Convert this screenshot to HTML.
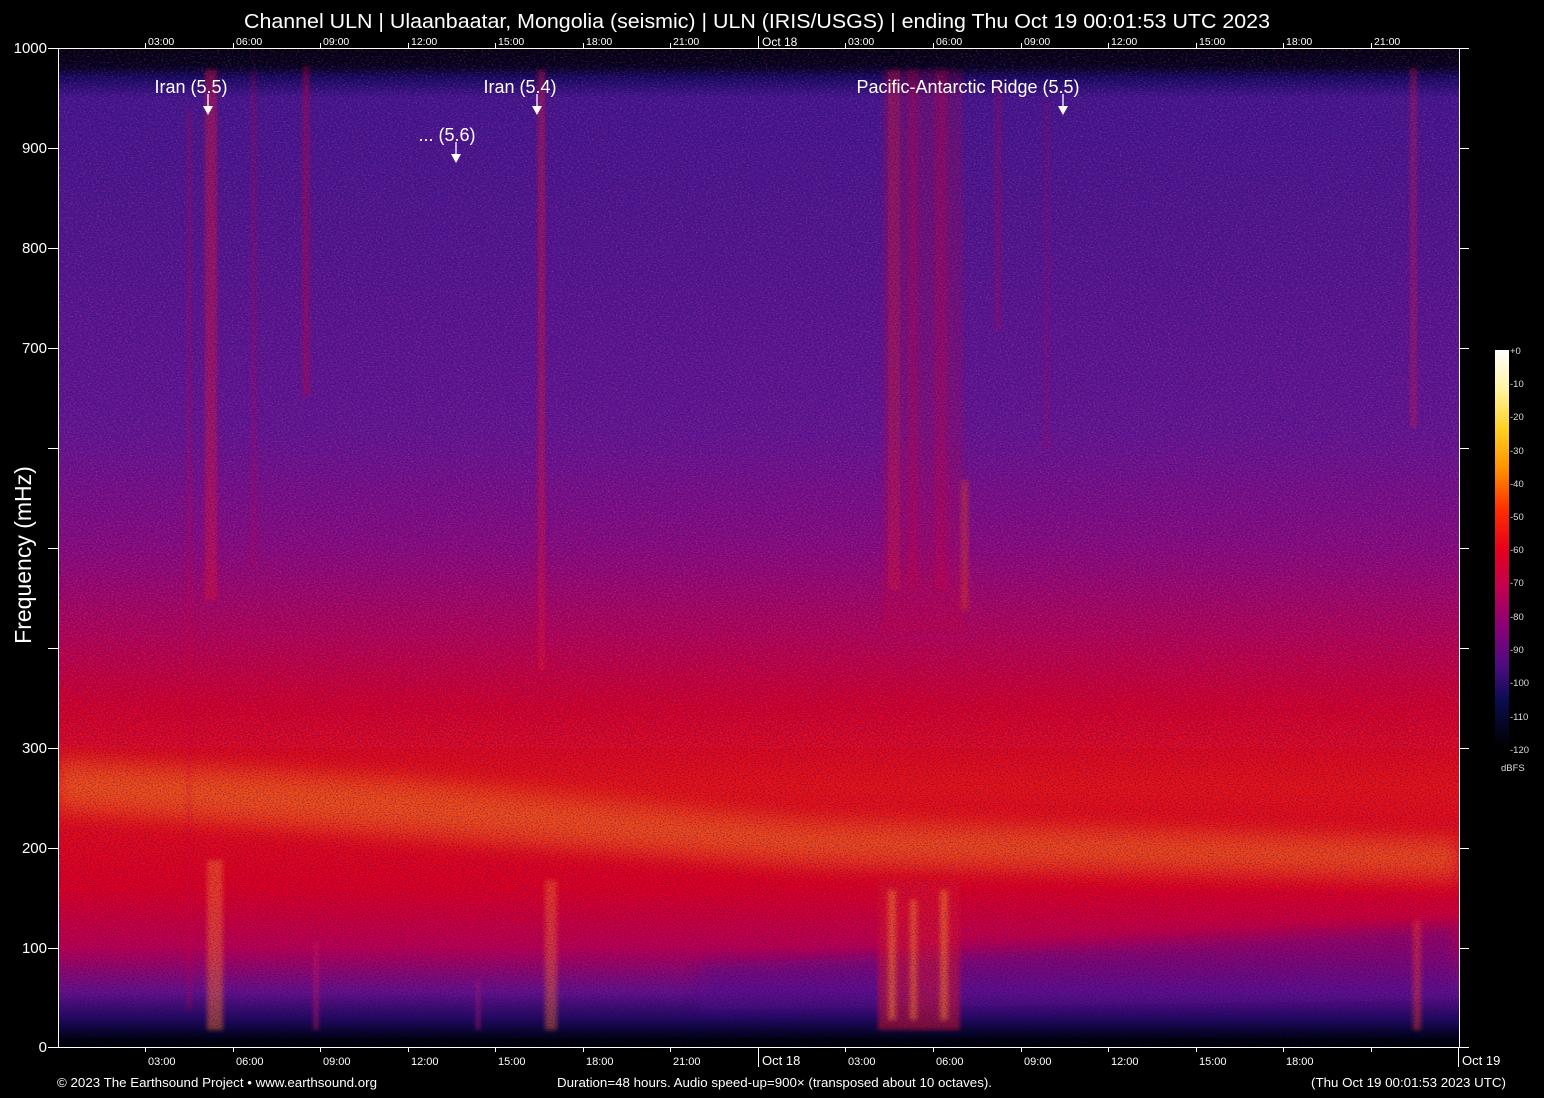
<!DOCTYPE html>
<html><head><meta charset="utf-8"><style>
html,body{margin:0;padding:0;background:#000;}
svg{display:block;font-family:"Liberation Sans",Arial,sans-serif;}
</style></head><body>
<svg width="1544" height="1098" viewBox="0 0 1544 1098" xmlns="http://www.w3.org/2000/svg">
<defs>
<linearGradient id="bg" x1="0" y1="48" x2="0" y2="1047" gradientUnits="userSpaceOnUse">
<stop offset="0" stop-color="#000"/>
<stop offset="0.018" stop-color="#02020f"/>
<stop offset="0.03" stop-color="#160b5a"/>
<stop offset="0.05" stop-color="#461888"/>
<stop offset="0.38" stop-color="#65178e"/>
<stop offset="0.50" stop-color="#8e0c7a"/>
<stop offset="0.59" stop-color="#bd044c"/>
<stop offset="0.66" stop-color="#dc001e"/>
<stop offset="0.74" stop-color="#ee1410"/>
<stop offset="0.84" stop-color="#e6001a"/>
<stop offset="0.90" stop-color="#c4004a"/>
<stop offset="0.945" stop-color="#6a1284"/>
<stop offset="0.972" stop-color="#240a58"/>
<stop offset="0.988" stop-color="#050418"/>
<stop offset="1" stop-color="#000"/>
</linearGradient>
<linearGradient id="cb" x1="0" y1="350" x2="0" y2="747" gradientUnits="userSpaceOnUse">
<stop offset="0" stop-color="#ffffff"/>
<stop offset="0.1" stop-color="#fff4a0"/>
<stop offset="0.2" stop-color="#ffd020"/>
<stop offset="0.3" stop-color="#ff9000"/>
<stop offset="0.4" stop-color="#ff3000"/>
<stop offset="0.5" stop-color="#e8001c"/>
<stop offset="0.6" stop-color="#c00050"/>
<stop offset="0.7" stop-color="#8a0078"/>
<stop offset="0.8" stop-color="#4a0c80"/>
<stop offset="0.88" stop-color="#0c0c50"/>
<stop offset="1" stop-color="#000"/>
</linearGradient>
<filter id="b8"><feGaussianBlur stdDeviation="8"/></filter>
<filter id="b2"><feGaussianBlur stdDeviation="2"/></filter>
<filter id="noise" x="0" y="0" width="100%" height="100%">
<feTurbulence type="fractalNoise" baseFrequency="0.6 0.9" numOctaves="2" seed="3"/>
<feColorMatrix type="matrix" values="0 0 0 0 0  0 0 0 0 0  0 0 0 0 0.3  0 0 0 -2.2 1.25"/>
</filter>
<filter id="noise2" x="0" y="0" width="100%" height="100%">
<feTurbulence type="fractalNoise" baseFrequency="0.5 0.8" numOctaves="2" seed="11"/>
<feColorMatrix type="matrix" values="0 0 0 0 0.85  0 0 0 0 0.05  0 0 0 0 0.3  0 0 0 -2.4 1.2"/>
</filter>
<clipPath id="plot"><rect x="58" y="48" width="1401" height="999"/></clipPath>
</defs>

<rect width="1544" height="1098" fill="#000"/>
<g clip-path="url(#plot)">
<rect x="58" y="48" width="1401" height="999" fill="url(#bg)"/>
<polygon points="700,965 1459,925 1459,1000 700,1010" fill="#5a1088" opacity="0.45" filter="url(#b8)"/>
<polygon points="58,755 400,775 800,815 1459,835 1459,885 800,870 400,840 58,815" fill="#ff6a10" opacity="0.4" filter="url(#b8)"/>
<polygon points="58,770 400,790 800,830 1459,848 1459,870 800,855 400,825 58,800" fill="#ff9a20" opacity="0.25" filter="url(#b8)"/>
<rect x="58" y="48" width="1401" height="700" filter="url(#noise2)" opacity="0.5"/>
<g filter="url(#b2)">
<rect x="187" y="110" width="4" height="900" fill="#e0103a" opacity="0.3"/>
<rect x="205" y="70" width="12" height="530" fill="#f0102a" opacity="0.45"/>
<rect x="207" y="860" width="16" height="170" fill="#ff7020" opacity="0.5"/>
<rect x="251" y="70" width="5" height="500" fill="#e0103a" opacity="0.25"/>
<rect x="303" y="66" width="6" height="330" fill="#e8102a" opacity="0.4"/>
<rect x="313" y="940" width="6" height="90" fill="#d01060" opacity="0.45"/>
<rect x="538" y="70" width="7" height="600" fill="#f0102a" opacity="0.45"/>
<rect x="545" y="880" width="12" height="150" fill="#ff7020" opacity="0.45"/>
<rect x="475" y="980" width="6" height="50" fill="#b01070" opacity="0.45"/>
<rect x="883" y="70" width="80" height="560" fill="#e8102a" opacity="0.2"/>
<rect x="888" y="70" width="12" height="520" fill="#f01020" opacity="0.3"/>
<rect x="908" y="70" width="10" height="520" fill="#f01020" opacity="0.25"/>
<rect x="935" y="70" width="12" height="520" fill="#f01020" opacity="0.25"/>
<rect x="962" y="480" width="6" height="130" fill="#ff5010" opacity="0.4"/>
<rect x="995" y="80" width="6" height="250" fill="#e0103a" opacity="0.25"/>
<rect x="1045" y="100" width="4" height="350" fill="#e0103a" opacity="0.2"/>
<rect x="1410" y="68" width="7" height="360" fill="#e8103a" opacity="0.35"/>
<rect x="1413" y="920" width="8" height="110" fill="#ff4020" opacity="0.45"/>
</g>
<rect x="878" y="880" width="82" height="150" fill="#e01428" opacity="0.55" filter="url(#b2)"/>
<g filter="url(#b2)" opacity="0.55">
<rect x="888" y="890" width="8" height="130" fill="#ff8020"/>
<rect x="910" y="900" width="7" height="120" fill="#ff8020"/>
<rect x="940" y="890" width="8" height="130" fill="#ff8020"/>
</g>
<rect x="58" y="1038" width="1401" height="9" fill="#000"/>
<rect x="58" y="48" width="1401" height="999" filter="url(#noise)" opacity="0.55"/>
</g>

<g stroke="#fff" stroke-width="1" fill="none">
<line x1="58.5" y1="48" x2="58.5" y2="1047"/>
<line x1="1459.5" y1="48" x2="1459.5" y2="1047"/>
<line x1="58" y1="48.5" x2="1469" y2="48.5"/>
<line x1="58" y1="1047.5" x2="1469" y2="1047.5"/>
<path d="M48 48.5h10M48 148.5h10M48 248.5h10M48 348.5h10M48 448.5h10M48 548.5h10M48 648.5h10M48 748.5h10M48 848.5h10M48 948.5h10M48 1047.5h10"/>
<path d="M1459 148.5h10M1459 248.5h10M1459 348.5h10M1459 448.5h10M1459 548.5h10M1459 648.5h10M1459 748.5h10M1459 848.5h10M1459 948.5h10"/>
<path d="M145.5 43v5M233.5 43v5M320.5 43v5M408.5 43v5M495.5 43v5M583.5 43v5M670.5 43v5M758.5 36v12M845.5 43v5M933.5 43v5M1021.5 43v5M1108.5 43v5M1196.5 43v5M1283.5 43v5M1371.5 43v5"/>
<path d="M145.5 1047v5M233.5 1047v5M320.5 1047v5M408.5 1047v5M495.5 1047v5M583.5 1047v5M670.5 1047v5M758.5 1047v20M845.5 1047v5M933.5 1047v5M1021.5 1047v5M1108.5 1047v5M1196.5 1047v5M1283.5 1047v5M1371.5 1047v5M1458.5 1047v20"/>
</g>

<text x="244" y="28" fill="#fff" font-size="20" textLength="1026" lengthAdjust="spacingAndGlyphs">Channel ULN | Ulaanbaatar, Mongolia (seismic) | ULN (IRIS/USGS) | ending Thu Oct 19 00:01:53 UTC 2023</text>

<g fill="#fff" font-size="10.5">
<text x="148" y="45">03:00</text><text x="236" y="45">06:00</text><text x="323" y="45">09:00</text><text x="411" y="45">12:00</text><text x="498" y="45">15:00</text><text x="586" y="45">18:00</text><text x="673" y="45">21:00</text>
<text x="762" y="46" font-size="12">Oct 18</text>
<text x="848" y="45">03:00</text><text x="936" y="45">06:00</text><text x="1024" y="45">09:00</text><text x="1111" y="45">12:00</text><text x="1199" y="45">15:00</text><text x="1286" y="45">18:00</text><text x="1374" y="45">21:00</text>
</g>
<g fill="#fff" font-size="11">
<text x="148" y="1065">03:00</text><text x="236" y="1065">06:00</text><text x="323" y="1065">09:00</text><text x="411" y="1065">12:00</text><text x="498" y="1065">15:00</text><text x="586" y="1065">18:00</text><text x="673" y="1065">21:00</text>
<text x="762" y="1065" font-size="13">Oct 18</text>
<text x="848" y="1065">03:00</text><text x="936" y="1065">06:00</text><text x="1024" y="1065">09:00</text><text x="1111" y="1065">12:00</text><text x="1199" y="1065">15:00</text><text x="1286" y="1065">18:00</text>
<text x="1462" y="1065" font-size="13">Oct 19</text>
</g>
<g fill="#fff" font-size="15" text-anchor="end">
<text x="47" y="53">1000</text><text x="47" y="153">900</text><text x="47" y="253">800</text><text x="47" y="353">700</text>
<text x="47" y="753">300</text><text x="47" y="853">200</text><text x="47" y="953">100</text><text x="47" y="1052">0</text>
</g>
<text transform="translate(31,555) rotate(-90)" fill="#fff" font-size="23" text-anchor="middle">Frequency (mHz)</text>

<g fill="#fff" font-size="18" text-anchor="middle">
<text x="191" y="93">Iran (5.5)</text>
<text x="520" y="93">Iran (5.4)</text>
<text x="447" y="141">... (5.6)</text>
<text x="968" y="93">Pacific-Antarctic Ridge (5.5)</text>
</g>
<g stroke="#fff" stroke-width="1.3">
<line x1="208" y1="94" x2="208" y2="108"/><line x1="537" y1="94" x2="537" y2="108"/><line x1="456" y1="142" x2="456" y2="156"/><line x1="1063" y1="94" x2="1063" y2="108"/>
</g>
<g fill="#fff">
<polygon points="203,106 213,106 208,115"/><polygon points="532,106 542,106 537,115"/><polygon points="451,154 461,154 456,163"/><polygon points="1058,106 1068,106 1063,115"/>
</g>

<rect x="1495" y="350" width="14" height="397" fill="url(#cb)"/>
<g fill="#ddd" font-size="9.5">
<text x="1510" y="354">+0</text><text x="1510" y="387">-10</text><text x="1510" y="420">-20</text><text x="1510" y="454">-30</text><text x="1510" y="487">-40</text><text x="1510" y="520">-50</text><text x="1510" y="553">-60</text><text x="1510" y="586">-70</text><text x="1510" y="620">-80</text><text x="1510" y="653">-90</text><text x="1510" y="686">-100</text><text x="1510" y="720">-110</text><text x="1510" y="753">-120</text>
<text x="1501" y="771">dBFS</text>
</g>

<g fill="#fff" font-size="13">
<text x="57" y="1087" textLength="320" lengthAdjust="spacingAndGlyphs">© 2023 The Earthsound Project • www.earthsound.org</text>
<text x="557" y="1087" textLength="435" lengthAdjust="spacingAndGlyphs">Duration=48 hours. Audio speed-up=900× (transposed about 10 octaves).</text>
<text x="1311" y="1087" textLength="195" lengthAdjust="spacingAndGlyphs">(Thu Oct 19 00:01:53 2023 UTC)</text>
</g>
</svg>
</body></html>
